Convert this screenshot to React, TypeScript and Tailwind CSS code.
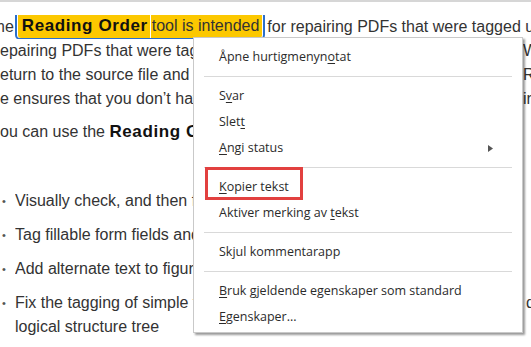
import React from 'react';

const body = { fontFamily: '"Liberation Sans", Arial, sans-serif' };
const menuFont = { fontFamily: '"Open Sans", "Noto Sans", sans-serif' };

function Key({ children }: { children: React.ReactNode }) {
  return <span className="underline decoration-1 underline-offset-[2px]">{children}</span>;
}

function Item({ children, arrow }: { children: React.ReactNode; arrow?: boolean }) {
  return (
    <div className="flex h-[26px] items-center justify-between pl-[25px] pr-[29px] whitespace-nowrap">
      <span>{children}</span>
      {arrow && (
        <svg width="5" height="7" viewBox="0 0 5 7" className="mt-px">
          <path d="M0 0 L5 3.5 L0 7 Z" fill="#555" />
        </svg>
      )}
    </div>
  );
}

function Sep() {
  return <div className="mx-[10px] my-[6px] h-px bg-[#d9d9d9]" />;
}

function Line({ left, right, className = '' }: { left: React.ReactNode; right?: string; className?: string }) {
  return (
    <div className={`flex h-6 items-center overflow-hidden whitespace-nowrap ${className}`}>
      <span className="w-[523px] shrink-0 overflow-hidden">{left}</span>
      {right && <span className="shrink-0">{right}</span>}
    </div>
  );
}

function Bullet({ children, right, className = '' }: { children: React.ReactNode; right?: string; className?: string }) {
  return (
    <div className={`flex h-6 items-center overflow-hidden whitespace-nowrap ${className}`}>
      <span className="w-[15px] shrink-0 pl-[2px] text-[11px] text-[#555]">•</span>
      <span className="w-[511px] shrink-0 overflow-hidden">{children}</span>
      {right && <span className="shrink-0">{right}</span>}
    </div>
  );
}

export default function App() {
  return (
    <div className="relative h-[347px] w-[531px] overflow-hidden bg-white text-[16px] text-[#333]" style={body}>
      <div className="h-[2px] bg-[#d6d6d6]" />

      <div className="mt-[13px]">
        {/* first line with the highlighted words */}
        <div className="flex h-6 items-center overflow-hidden whitespace-nowrap">
          <span className="-ml-[4px]">he</span>
          <span className="ml-px flex h-[29px] -mt-[3px] items-stretch rounded-[5px] border-2 border-[#2a6fcc] pl-px pr-px">
            <span className="flex items-center rounded-l-[3px] bg-[#fcc800] pl-[4px] pr-[2px] text-[17px] font-bold tracking-[0.6px] text-[#111]">
              Reading Order
            </span>
            <span className="ml-px flex items-center rounded-r-[3px] bg-[#fcc800] pl-[1px] pr-[3px] text-[#333]">
              tool is intended
            </span>
          </span>
          <span className="ml-[2px]">for repairing PDFs that were tagged u</span>
        </div>

        <Line left="epairing PDFs that were tagged using the authoring application." right="W" />
        <Line left="eturn to the source file and set the tagging options there." right="R" />
        <Line left="e ensures that you don’t have to repeat the repair in Acrobat." right="ir" />

        <Line
          className="mt-[9px]"
          left={
            <>
              ou can use the <span className="text-[17px] font-bold tracking-[0.6px] text-[#111]">Reading Order</span> tool to:
            </>
          }
        />

        <Bullet className="mt-[45px]">Visually check, and then fix, the reading order of page content</Bullet>
        <Bullet className="mt-[10px]">Tag fillable form fields and their labels</Bullet>
        <Bullet className="mt-[10px]">Add alternate text to figures and descriptions to table cells</Bullet>
        <Bullet className="mt-[10px]" right="d">
          Fix the tagging of simple tables and prepare complex tables for the
        </Bullet>
        <div className="flex h-6 items-center whitespace-nowrap pl-[15px]">logical structure tree</div>
      </div>

      {/* context menu */}
      <div
        className="absolute left-[193px] top-[37px] h-[296px] w-[330px] border border-[#c9c9c9] bg-white pt-[6px] text-[12.5px] text-[#2b2b2b] shadow-[2px_2px_2px_rgba(0,0,0,0.4)]"
        style={menuFont}
      >
        <Item>
          Åpne hurtigmenyn<Key>o</Key>tat
        </Item>
        <Sep />
        <Item>
          S<Key>v</Key>ar
        </Item>
        <Item>
          Slet<Key>t</Key>
        </Item>
        <Item arrow>
          <Key>A</Key>ngi status
        </Item>
        <Sep />
        <Item>
          <Key>K</Key>opier tekst
        </Item>
        <Item>
          Aktiver merking av <Key>t</Key>ekst
        </Item>
        <Sep />
        <Item>Skjul kommentarapp</Item>
        <Sep />
        <Item>
          <Key>B</Key>ruk gjeldende egenskaper som standard
        </Item>
        <Item>
          <Key>E</Key>genskaper...
        </Item>

        <div className="absolute left-[11px] top-[129px] h-[33px] w-[98px] border-[3px] border-[#e2403f]" />
      </div>
    </div>
  );
}
